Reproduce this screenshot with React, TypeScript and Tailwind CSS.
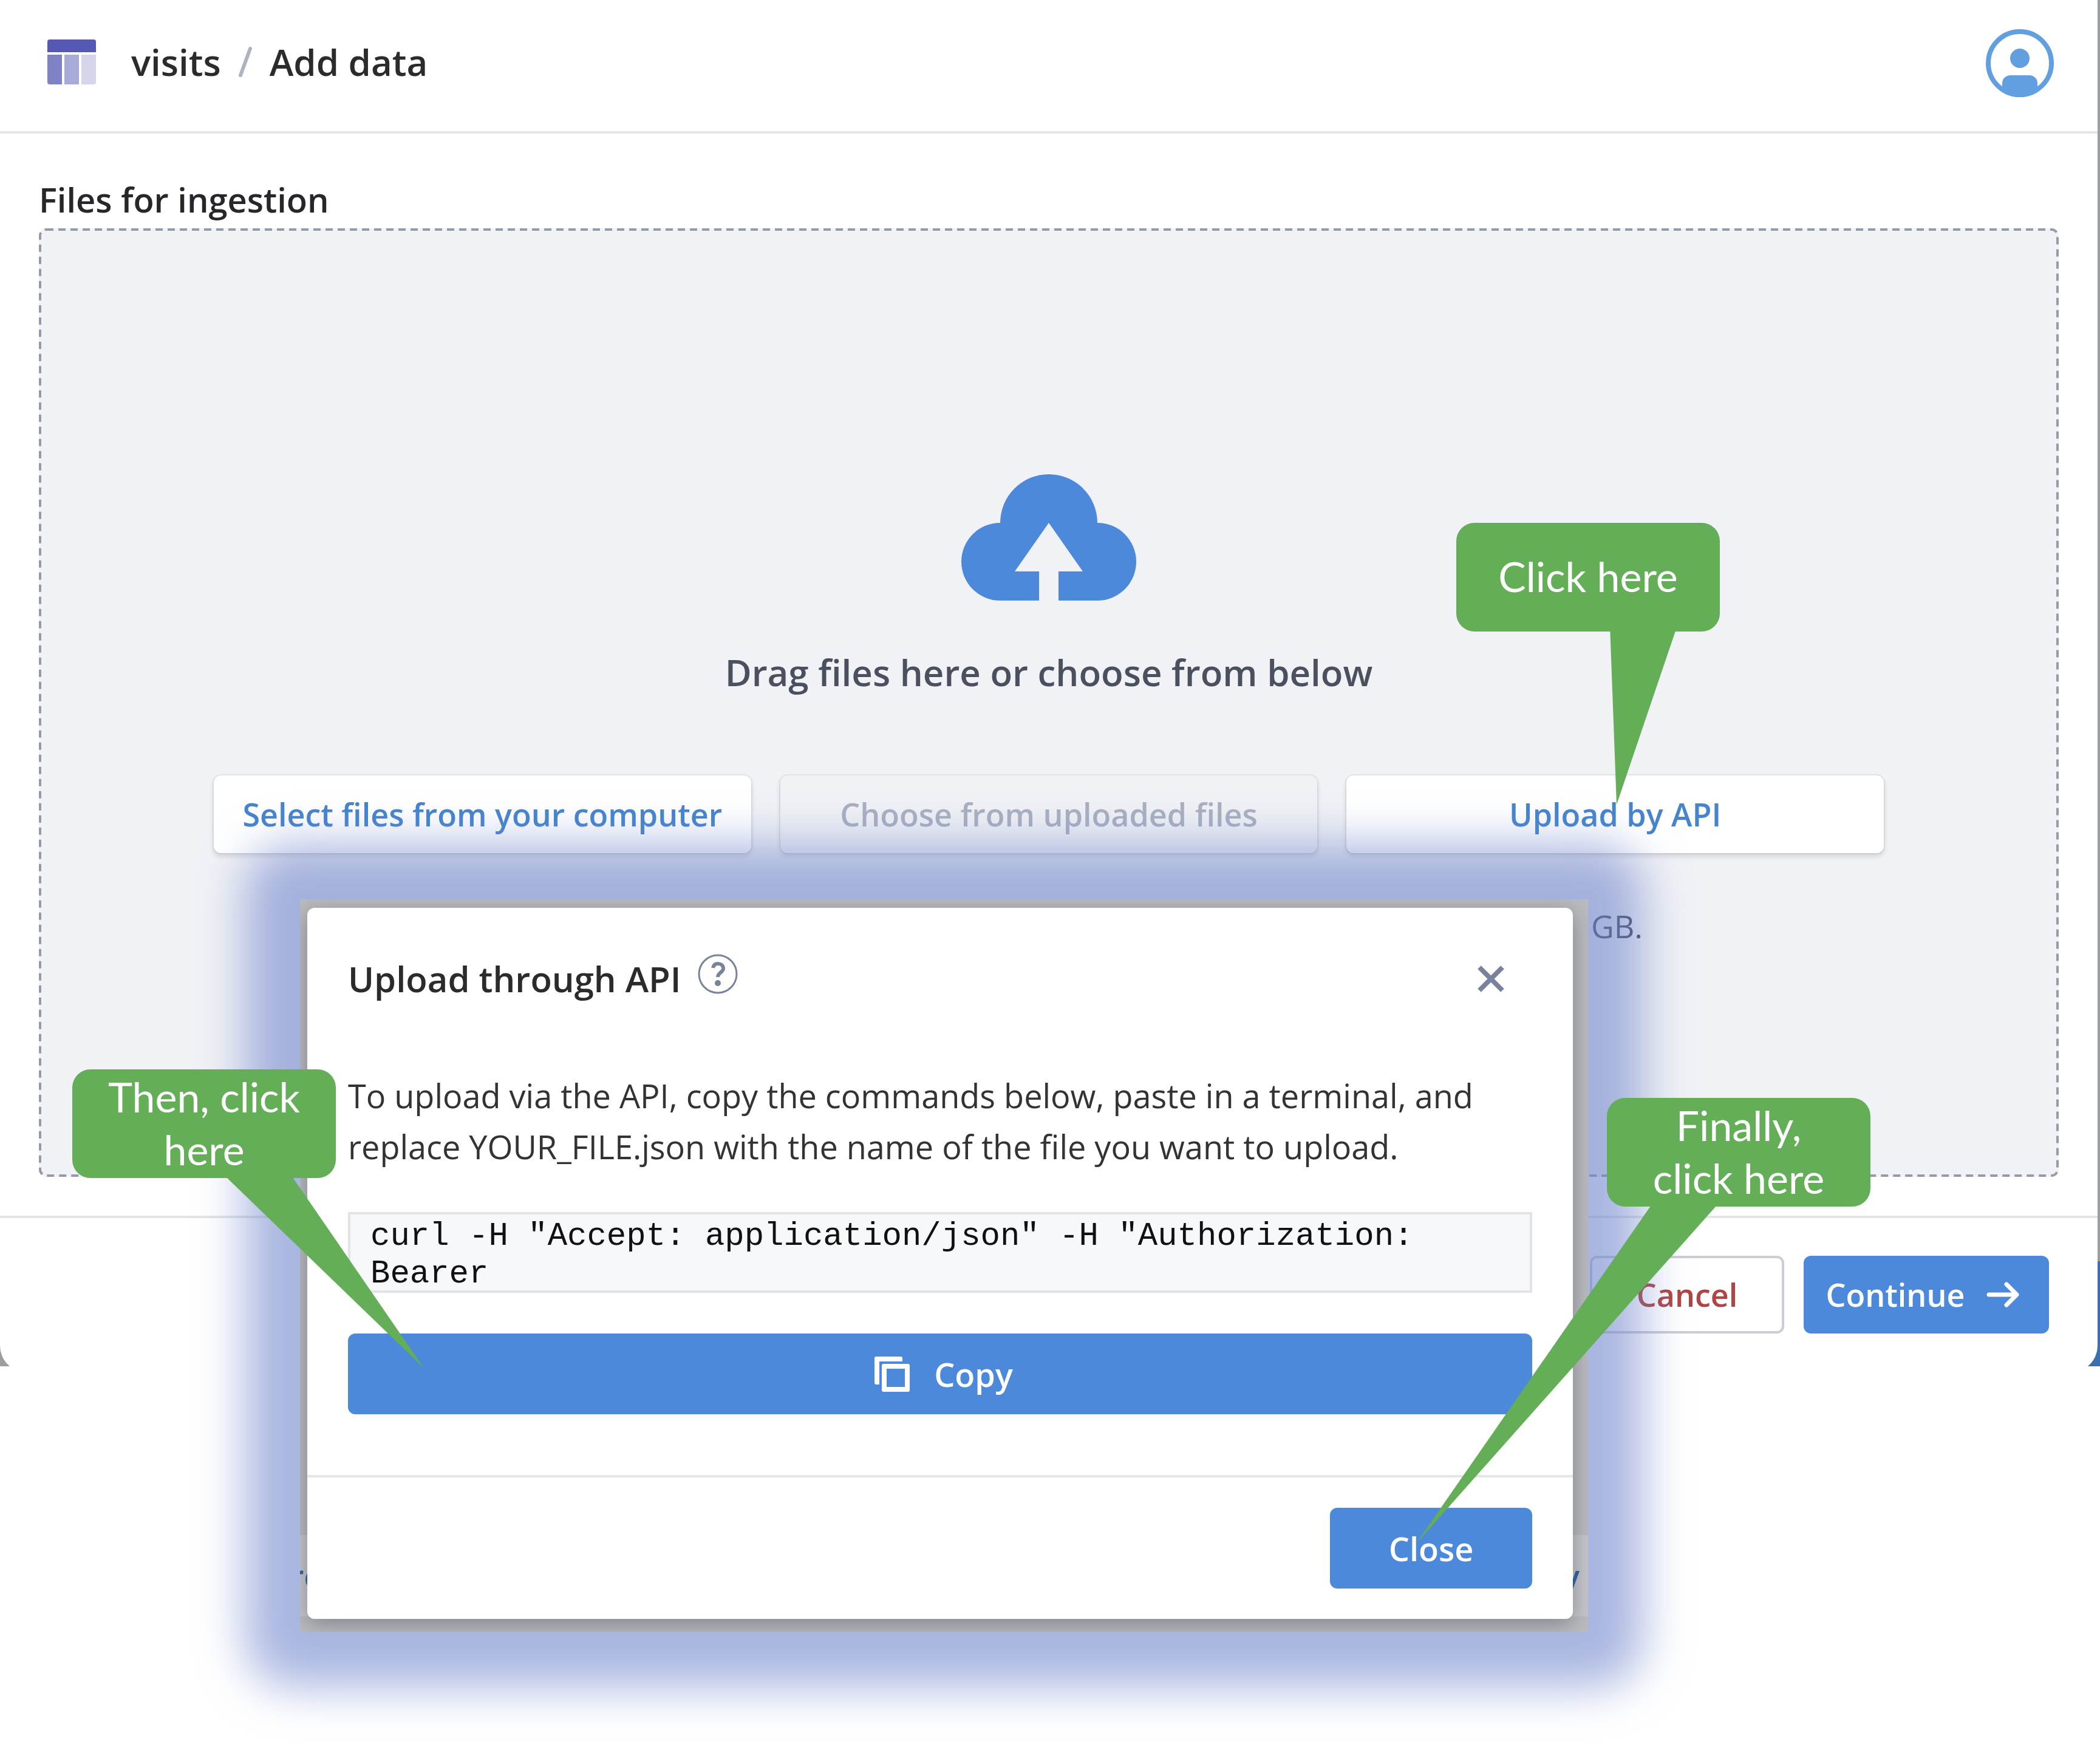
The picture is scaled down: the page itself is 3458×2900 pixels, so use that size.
import type { ReactNode } from "react";

function TableLogo() {
  return (
    <svg viewBox="0 0 80 74" className="h-[74px] w-20" aria-hidden="true">
      <path d="M4 0h72a4 4 0 0 1 4 4v17H0V4a4 4 0 0 1 4-4z" fill="#5459b5" />
      <path d="M0 25h24v49H4a4 4 0 0 1-4-4z" fill="#7f83c6" />
      <path d="M28 25h24v49H28z" fill="#a7abda" />
      <path d="M56 25h24v45a4 4 0 0 1-4 4H56z" fill="#d4d5ea" />
    </svg>
  );
}

function AvatarIcon() {
  return (
    <svg viewBox="0 0 112 112" className="size-28" aria-hidden="true">
      <defs>
        <clipPath id="avatar-clip">
          <circle cx="56" cy="56" r="56" />
        </clipPath>
      </defs>
      <circle cx="56" cy="56" r="52" fill="none" stroke="#629fe0" strokeWidth="8" />
      <circle cx="56" cy="48" r="16" fill="#629fe0" />
      <rect x="27" y="76" width="58" height="60" rx="13" fill="#629fe0" clipPath="url(#avatar-clip)" />
    </svg>
  );
}

function CloudUploadIcon() {
  return (
    <svg viewBox="0 0 288 208" className="h-[208px] w-72" aria-hidden="true">
      <path
        d="M64 208a64 64 0 0 1 0-128a80 80 0 0 1 160 0a64 64 0 0 1 0 128h-64v-48h40L144 80L88 160h40v48z"
        fill="#4c89da"
      />
    </svg>
  );
}

function HelpIcon() {
  return (
    <svg viewBox="0 0 66 66" className="size-[66px]" fill="none" stroke="#7b829b" aria-hidden="true">
      <circle cx="33" cy="33" r="31" strokeWidth="3" />
      <path d="M25 23c1-5 4-7 8-7c5 0 9 3 9 8c0 6-9 7-9 14" strokeWidth="6" />
      <circle cx="33" cy="48" r="5" fill="#7b829b" stroke="none" />
    </svg>
  );
}

function CloseIcon() {
  return (
    <svg viewBox="0 0 44 44" className="size-11" stroke="#7b829b" strokeWidth="8" aria-hidden="true">
      <path d="M3 3L41 41M41 3L3 41" />
    </svg>
  );
}

function CopyIcon() {
  return (
    <svg viewBox="0 0 58 58" className="size-[58px]" fill="#fff" aria-hidden="true">
      <path d="M3 0H43a3 3 0 0 1 3 3V8H8V46H3a3 3 0 0 1-3-3V3a3 3 0 0 1 3-3z" />
      <path
        fillRule="evenodd"
        d="M15 12H55a3 3 0 0 1 3 3V55a3 3 0 0 1-3 3H15a3 3 0 0 1-3-3V15a3 3 0 0 1 3-3zM20 20V50H50V20z"
      />
    </svg>
  );
}

function ArrowIcon() {
  return (
    <svg
      viewBox="0 0 54 42"
      className="h-[42px] w-[54px]"
      fill="none"
      stroke="#fff"
      strokeWidth="7"
      strokeLinecap="round"
      strokeLinejoin="round"
      aria-hidden="true"
    >
      <path d="M4 21H49M33 4L50 21L33 38" />
    </svg>
  );
}

function SourceButton({ children, disabled = false }: { children: ReactNode; disabled?: boolean }) {
  return (
    <button
      type="button"
      disabled={disabled}
      className="h-32 rounded-xl bg-white text-[52px] leading-[72px] font-semibold whitespace-nowrap text-[#4684cf] shadow-[0_0_0_2px_rgba(16,22,26,0.05),0_5px_8px_rgba(16,22,26,0.14)] disabled:bg-[#f1f2f5] disabled:text-[#a9b0c0]"
    >
      {children}
    </button>
  );
}

function Callout({ place, tail, children }: { place: string; tail: ReactNode; children: ReactNode }) {
  return (
    <div className={place}>
      {tail}
      <div className="relative flex h-[179px] w-[434px] items-center justify-center rounded-[30px] bg-[#63ae57] px-12 pb-1 text-center font-['Lato',sans-serif] text-[68px] leading-[87px] text-white">
        {children}
      </div>
    </div>
  );
}

function UploadDialog() {
  return (
    <div className="absolute top-[1481px] left-[494px] w-[2121px] rounded-3xl shadow-[0_0_76px_90px_rgba(112,134,203,0.6)]">
      <div className="relative overflow-hidden bg-[#bbbcbf] pt-3.5 pr-[25px] pb-[22px] pl-3">
        <div
          aria-hidden="true"
          className="absolute inset-x-0 bottom-[26px] flex h-[134px] items-center justify-between bg-[#c6c7ca] text-[52px] leading-[72px] font-semibold text-[#3467a3]"
        >
          <span className="-ml-4">re</span>
          <span className="mr-3.5">y</span>
        </div>
        <section
          role="dialog"
          aria-labelledby="dialog-title"
          className="relative rounded-xl bg-white shadow-[0_8px_36px_rgba(16,22,50,0.35)]"
        >
          <div className="px-[67px] pt-[76px] pb-[100px]">
            <div className="flex items-center">
              <h2 id="dialog-title" className="text-[58px] leading-20 font-semibold text-[#2b2b2b]">
                Upload through API
              </h2>
              <button type="button" aria-label="Help" className="ml-7 pb-4">
                <HelpIcon />
              </button>
              <button type="button" aria-label="Close dialog" className="mr-[46px] ml-auto">
                <CloseIcon />
              </button>
            </div>
            <p className="mt-[109px] text-[54px] leading-[84px] text-[#333]">
              To upload via the API, copy the commands below, paste in a terminal, and replace YOUR_FILE.json with the
              name of the file you want to upload.
            </p>
            <pre className="mt-[66px] h-[133px] border-4 border-[#e2e4e7] bg-[#f7f8fa] pt-[5px] pl-[33px] font-['Liberation_Mono',monospace] text-[54px] leading-[62px] whitespace-pre-wrap text-[#111]">
              {'curl -H "Accept: application/json" -H "Authorization: Bearer'}
            </pre>
            <button
              type="button"
              className="mt-[67px] flex h-[133px] w-full items-center justify-center gap-10 rounded-xl bg-[#4c89da] pl-3 text-[54px] leading-[72px] font-semibold text-white"
            >
              <CopyIcon />
              Copy
            </button>
          </div>
          <div className="flex justify-end border-t-4 border-[#e5e6e8] px-[67px] py-[50px]">
            <button
              type="button"
              className="h-[133px] w-[333px] rounded-xl bg-[#4c89da] text-[54px] leading-[72px] font-semibold text-white"
            >
              Close
            </button>
          </div>
        </section>
      </div>
    </div>
  );
}

export default function App() {
  return (
    <div className="relative min-h-[2900px] overflow-hidden bg-white font-['Open_Sans',sans-serif]">
      <div className="overflow-hidden bg-[#9c9d9f] bg-[linear-gradient(#3a70b0,#3a70b0)] bg-[length:48px_173px] bg-right-bottom bg-no-repeat pr-1">
        <div className="-mb-2.5 rounded-b-[44px] bg-white">
          <header className="flex h-[220px] items-center justify-between border-b-4 border-[#e4e5e6] pr-[72px] pb-2 pl-[78px]">
            <div className="flex items-center pb-1">
              <TableLogo />
              <nav
                aria-label="Breadcrumb"
                className="ml-[58px] flex items-center text-[60px] leading-20 font-semibold text-[#2b2b2b]"
              >
                <a href="#visits">visits</a>
                <svg
                  viewBox="0 0 24 52"
                  className="mx-7 h-[52px] w-6"
                  stroke="#adb3c1"
                  strokeWidth="6"
                  strokeLinecap="round"
                  aria-hidden="true"
                >
                  <path d="M4 48L20 4" />
                </svg>
                <span>Add data</span>
              </nav>
            </div>
            <button type="button" aria-label="Account">
              <AvatarIcon />
            </button>
          </header>

          <main className="px-16 pt-[72px] pb-16">
            <h1 className="text-[56px] leading-[72px] font-semibold text-[#26272b]">Files for ingestion</h1>
            <div className="relative mt-3 flex min-h-[1562px] flex-col items-center rounded-xl bg-[#f1f2f6] px-72 pt-[405px]">
              <svg
                className="absolute top-0.5 left-0.5 h-[calc(100%-4px)] w-[calc(100%-4px)] overflow-visible"
                fill="none"
                aria-hidden="true"
              >
                <rect width="100%" height="100%" rx="10" stroke="#9699a9" strokeWidth="4" strokeDasharray="12 8" />
              </svg>
              <CloudUploadIcon />
              <p className="mt-[78px] text-[60px] leading-20 font-semibold text-[#4b505e]">
                Drag files here or choose from below
              </p>
              <div className="mt-[130px] grid w-full grid-cols-3 gap-12">
                <SourceButton>Select files from your computer</SourceButton>
                <SourceButton disabled>Choose from uploaded files</SourceButton>
                <SourceButton>Upload by API</SourceButton>
              </div>
              <p className="mt-21 mr-[397px] self-end text-[52px] leading-[72px] text-[#434c5e]">GB.</p>
            </div>
          </main>

          <footer className="flex justify-end gap-8 border-t-4 border-[#e2e4e7] pt-[62px] pr-20 pb-16">
            <button
              type="button"
              className="h-32 w-[320px] rounded-xl border-4 border-[#cbccd4] bg-white text-[52px] leading-[72px] font-semibold text-[#b04444]"
            >
              Cancel
            </button>
            <button
              type="button"
              className="flex h-32 w-[404px] items-center justify-center gap-9 rounded-xl bg-[#4c89da] pr-3 text-[52px] leading-[72px] font-semibold text-white"
            >
              Continue
              <ArrowIcon />
            </button>
          </footer>
        </div>
      </div>

      <UploadDialog />

      <Callout
        place="absolute top-[861px] left-[2398px]"
        tail={
          <svg viewBox="0 0 434 464" className="absolute top-0 left-0 h-[464px] w-[434px]" aria-hidden="true">
            <path d="M253 170L361 178L264 464z" fill="#63ae57" />
          </svg>
        }
      >
        Click here
      </Callout>
      <Callout
        place="absolute top-[1761px] left-[119px]"
        tail={
          <svg viewBox="0 0 580 493" className="absolute top-0 left-0 h-[493px] w-[580px]" aria-hidden="true">
            <path d="M254 178L363 178L579 492z" fill="#63ae57" />
          </svg>
        }
      >
        Then, click here
      </Callout>
      <Callout
        place="absolute top-[1808px] left-[2646px]"
        tail={
          <svg viewBox="0 0 500 736" className="absolute top-0 -left-[316px] h-[736px] w-[500px]" aria-hidden="true">
            <path d="M388 178L496 178L1 735z" fill="#63ae57" />
          </svg>
        }
      >
        Finally, click here
      </Callout>
    </div>
  );
}
